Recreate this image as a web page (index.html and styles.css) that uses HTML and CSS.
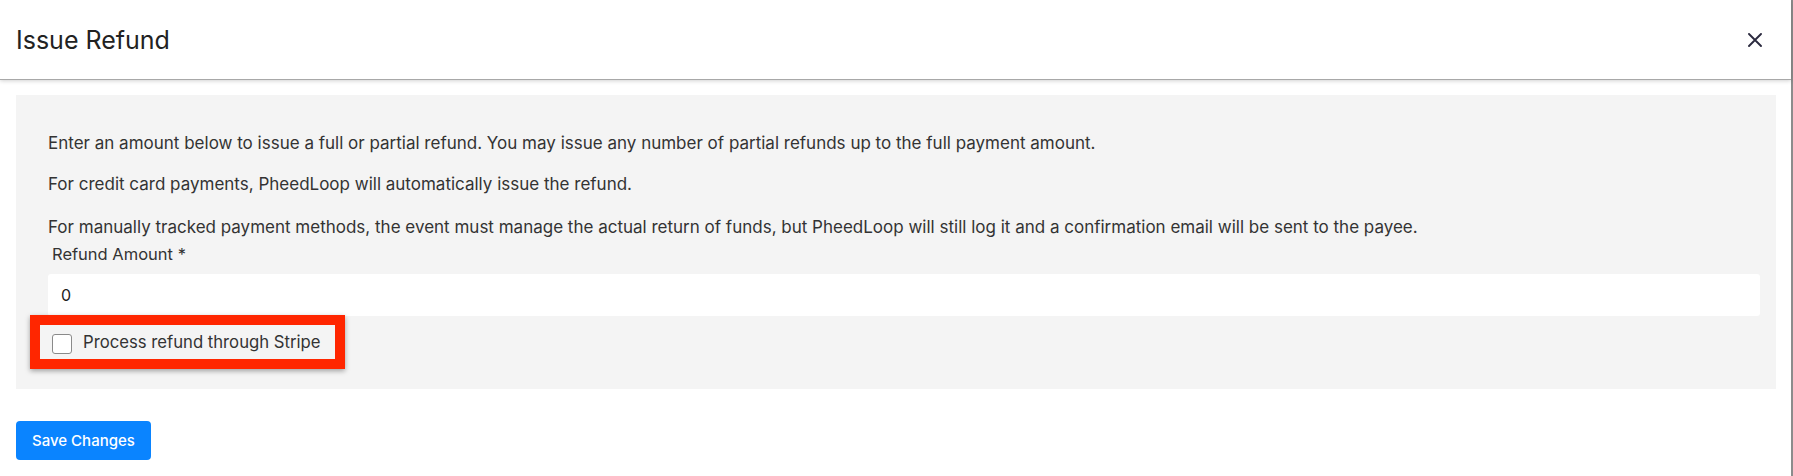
FILE: index.html
```html
<!DOCTYPE html>
<html lang="en">
<head>
<meta charset="utf-8">
<title>Issue Refund</title>
<link rel="stylesheet" href="styles.css">
</head>
<body>
<div class="modal">
  <header class="modal-header">
    <h5 class="modal-title">Issue Refund</h5>
    <button class="close" type="button" aria-label="Close">
      <svg width="14" height="14" viewBox="0 0 14 14" aria-hidden="true">
        <path d="M1 1 L13 13 M13 1 L1 13" stroke="#2b2a3f" stroke-width="1.9" stroke-linecap="round" fill="none"/>
      </svg>
    </button>
  </header>
  <main class="modal-body">
    <section class="panel">
      <p class="note">Enter an amount below to issue a full or partial refund. You may issue any number of partial refunds up to the full payment amount.</p>
      <p class="note">For credit card payments, PheedLoop will automatically issue the refund.</p>
      <p class="note">For manually tracked payment methods, the event must manage the actual return of funds, but PheedLoop will still log it and a confirmation email will be sent to the payee.</p>
      <label class="field-label" for="amount">Refund Amount *</label>
      <input class="field-input" id="amount" type="text" value="0">
      <div class="highlight">
        <label class="check-row">
          <input class="check" type="checkbox">
          <span>Process refund through Stripe</span>
        </label>
      </div>
    </section>
    <button class="btn-primary" type="button">Save Changes</button>
  </main>
</div>
</body>
</html>
```

FILE: styles.css
```css
* { box-sizing: border-box; }

html, body {
  margin: 0;
  padding: 0;
  background: #ffffff;
}

body {
  font-family: Inter, "Open Sans", "Liberation Sans", sans-serif;
  color: #333333;
  height: 476px;
  overflow: hidden;
}

.modal {
  width: 100%;
  height: 476px;
  border-right: 2px solid #8c8c8c;
  background: #ffffff;
}

.modal-header {
  height: 80px;
  display: flex;
  align-items: center;
  justify-content: space-between;
  padding: 0 29px 0 16px;
  border-bottom: 1px solid #a8a8a8;
  box-shadow: 0 1px 4px rgba(0, 0, 0, 0.18);
  position: relative;
  z-index: 1;
}

.modal-title {
  margin: 0;
  font-size: 25px;
  font-weight: 400;
  color: #222222;
  line-height: 1;
  padding-top: 1px;
}

.close {
  border: 0;
  background: transparent;
  padding: 0;
  width: 14px;
  height: 14px;
  display: flex;
  cursor: pointer;
}

.modal-body {
  padding: 15px 15px 0 16px;
}

.panel {
  background: #f4f4f4;
  padding: 36px 16px 20px 32px;
  display: flex;
  flex-direction: column;
  align-items: flex-start;
}

.note {
  margin: 0 0 17px 0;
  font-size: 17px;
  line-height: 24px;
  color: #333333;
}

.note:nth-of-type(2) {
  margin-bottom: 19px;
}

.note:nth-of-type(3) {
  margin-bottom: 3px;
}

.field-label {
  font-size: 16.5px;
  line-height: 24px;
  padding-left: 4px;
  color: #333333;
  margin-bottom: 8px;
}

.field-input {
  width: 100%;
  height: 42px;
  border: 0;
  border-radius: 3px;
  background: #ffffff;
  padding: 0 13px;
  font-family: inherit;
  font-size: 16px;
  color: #222222;
  outline: none;
}

.highlight {
  margin: -1px 0 0 -18px;
  border: 10px solid #ff2600;
  box-shadow: 0 2px 5px rgba(0, 0, 0, 0.35);
  background: #f4f4f4;
  padding: 0 14px 0 12px;
  height: 54px;
  display: flex;
  align-items: center;
}

.check-row {
  display: flex;
  align-items: center;
  gap: 11px;
  font-size: 16.7px;
  color: #333333;
  line-height: 24px;
}

.check {
  appearance: none;
  -webkit-appearance: none;
  margin: 3px 0 0 0;
  width: 20px;
  height: 20px;
  border: 1px solid #8a8a8a;
  border-radius: 3px;
  background: #ffffff;
}

.btn-primary {
  margin-top: 32px;
  height: 39px;
  padding: 0 16px;
  border: 0;
  border-radius: 4px;
  background: #0a84ff;
  color: #ffffff;
  font-family: inherit;
  font-size: 15px;
  font-weight: 500;
  cursor: pointer;
}
```
